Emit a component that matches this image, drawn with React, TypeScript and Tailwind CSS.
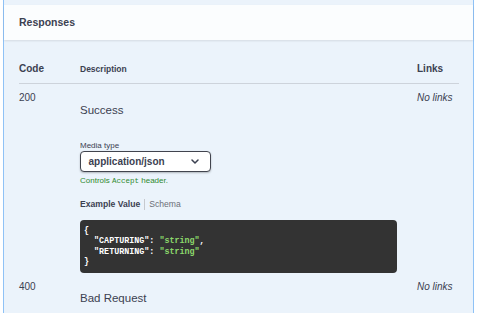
import React from 'react';

const Chevron = () => (
  <svg width="8" height="5" viewBox="0 0 8 5" className="block">
    <path d="M1 1l3 3 3-3" fill="none" stroke="#3b4151" strokeWidth="1.5" strokeLinecap="round" strokeLinejoin="round" />
  </svg>
);

const NoLinks = () => (
  <div className="w-[41px] shrink-0 text-[10px] italic leading-none whitespace-nowrap">No links</div>
);

const codeLines: [string, string, string][] = [
  ['{', '', ''],
  ['  "CAPTURING": ', '"string"', ','],
  ['  "RETURNING": ', '"string"', ''],
  ['}', '', ''],
];

export default function App() {
  return (
    <div className="w-[480px] h-[313px] bg-white overflow-hidden font-['Liberation_Sans',Arial,sans-serif] text-[#3b4151]">
      <div className="ml-[3px] w-[471px] h-full border-x border-[#8fc2f6] bg-[#ebf3fb] pt-[5px]">
        {/* Section header */}
        <div className="h-[35px] bg-white/80 shadow-[0_1px_2px_rgba(0,0,0,0.1)] flex items-center px-[15px]">
          <h4 className="text-[10.5px] font-bold leading-none">Responses</h4>
        </div>

        <div className="pl-[15px] pr-[14px]">
          {/* Column headers */}
          <div className="flex items-baseline pt-[24px] pb-[9px] border-b border-[#cdd3db] leading-none">
            <div className="w-[61px] shrink-0 text-[10px] font-bold">Code</div>
            <div className="w-[337px] shrink-0 text-[8.5px] font-bold">Description</div>
            <div className="w-[41px] shrink-0 text-[10px] font-bold">Links</div>
          </div>

          {/* 200 */}
          <div className="flex items-start pt-[9px]">
            <div className="w-[61px] shrink-0 text-[10px] leading-none">200</div>
            <div className="w-[337px] shrink-0">
              <p className="mt-[12px] text-[11.5px] leading-none">Success</p>
              <div className="mt-[25px] text-[8px] leading-none">Media type</div>
              <div className="mt-[1.5px] w-[131px] h-[21px] border-[1.5px] border-[#41444e] rounded-[4px] bg-white flex items-center justify-between pl-[7.5px] pr-[11px] shadow-[0_1px_2px_rgba(0,0,0,0.25)]">
                <span className="text-[10px] font-bold leading-none">application/json</span>
                <Chevron />
              </div>
              <div className="mt-[4.5px] text-[8px] leading-none text-[#2f8a2f] whitespace-nowrap">
                Controls <code className="font-['Liberation_Mono',monospace] text-[7.5px]">Accept</code> header.
              </div>
              <div className="mt-[14px] flex items-center leading-none text-[8.6px]">
                <span className="font-bold pr-[4px]">Example Value</span>
                <span className="w-px h-[11px] bg-[#c6c9ce]" />
                <span className="pl-[4px] text-[#6b6f78]">Schema</span>
              </div>
              <div className="mt-[10px] w-[317px] h-[53px] rounded-[4px] bg-[#333333] px-[4px] py-[5.5px] font-['Liberation_Mono',monospace] font-bold text-[8.4px] text-white">
                {codeLines.map(([key, val, tail], i) => (
                  <div key={i} className="h-[10.5px] leading-[10.5px] whitespace-pre">
                    {key}
                    {val && <span className="text-[#8bd86b]">{val}</span>}
                    {tail}
                  </div>
                ))}
              </div>
            </div>
            <NoLinks />
          </div>

          {/* 400 */}
          <div className="flex items-start pt-[9px]">
            <div className="w-[61px] shrink-0 text-[10px] leading-none">400</div>
            <div className="w-[337px] shrink-0">
              <p className="mt-[11px] text-[11.5px] leading-none">Bad Request</p>
            </div>
            <NoLinks />
          </div>
        </div>
      </div>
    </div>
  );
}
